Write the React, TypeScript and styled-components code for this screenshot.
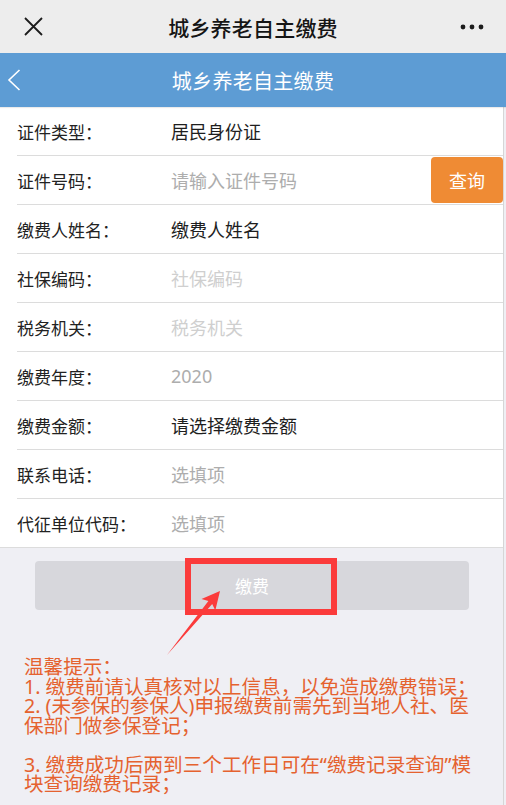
import React from "react";
import styled, { createGlobalStyle } from "styled-components";

const GlobalStyle = createGlobalStyle`
  html, body {
    margin: 0;
    padding: 0;
    background: #efeff4;
    font-family: "Noto Sans", "Noto Sans CJK SC", sans-serif;
  }
  * { box-sizing: border-box; }
`;

const Page = styled.div`
  width: 506px;
  min-height: 805px;
  background: #efeff4;
  display: flex;
  flex-direction: column;
`;

const TopBar = styled.header`
  height: 53px;
  background: #ededed;
  display: grid;
  grid-template-columns: 70px 1fr 70px;
  align-items: center;
`;

const TopTitle = styled.h1`
  margin: 0;
  text-align: center;
  font-size: 21px;
  font-weight: 500;
  color: #151515;
  letter-spacing: 0.2px;
`;

const IconSlot = styled.div<{ $align: "start" | "end" }>`
  display: flex;
  justify-content: ${(p) => (p.$align === "start" ? "flex-start" : "flex-end")};
  padding: ${(p) => (p.$align === "start" ? "0 0 0 24px" : "0 22px 0 0")};
  align-items: center;
`;

const NavBar = styled.nav`
  height: 54px;
  background: #5d9cd4;
  display: grid;
  grid-template-columns: 60px 1fr 60px;
  align-items: center;
  box-shadow: 0 1px 1px rgba(0, 0, 0, 0.08);
  position: relative;
  z-index: 1;
`;

const NavTitle = styled.div`
  text-align: center;
  font-size: 20px;
  color: #ffffff;
  letter-spacing: 0.3px;
`;

const Back = styled.div`
  padding-left: 7px;
  display: flex;
  align-items: center;
`;

const Content = styled.main`
  width: 504px;
  border-right: 1px solid #d6d6d6;
  flex: 1;
  display: flex;
  flex-direction: column;
`;

const Form = styled.section`
  background: #ffffff;
  border-bottom: 1px solid #dcdcdc;
`;

const Row = styled.div<{ $last?: boolean }>`
  height: ${(p) => (p.$last ? "48px" : "49px")};
  margin-left: 17px;
  border-bottom: ${(p) => (p.$last ? "none" : "1px solid #dcdcdc")};
  display: flex;
  align-items: center;
`;

const Label = styled.span`
  width: 154px;
  flex: none;
  font-size: 17px;
  color: #222222;
`;

const Value = styled.span<{ $tone: "dark" | "hint" | "faint" }>`
  flex: 1;
  font-size: 18px;
  color: ${(p) =>
    p.$tone === "dark" ? "#1e1e1e" : p.$tone === "hint" ? "#adadad" : "#cfcfcf"};
`;

const QueryButton = styled.button`
  width: 72px;
  height: 46px;
  margin-bottom: 1px;
  border: none;
  border-radius: 4px;
  background: #ef8b34;
  color: #ffffff;
  font-family: inherit;
  font-size: 18px;
  padding: 0;
`;

const ActionArea = styled.section`
  position: relative;
  flex: 1;
  padding-top: 13px;
  display: flex;
  flex-direction: column;
`;

const PayButton = styled.div`
  position: relative;
  height: 49px;
  margin: 0 34px 0 35px;
  border-radius: 4px;
  background: #d7d7dc;
  color: #ffffff;
  font-size: 17px;
  display: flex;
  align-items: center;
  justify-content: center;
`;

const Highlight = styled.div`
  position: absolute;
  left: 150px;
  top: -3px;
  width: 152px;
  height: 57px;
  border: 6px solid #fb3b3b;
`;

const Arrow = styled.svg`
  position: absolute;
  left: 0;
  top: 0;
  pointer-events: none;
`;

const Tips = styled.div`
  margin: 47px 0 0 24px;
  width: 459px;
  color: #e5622f;
  font-size: 19.6px;
  line-height: 19.5px;
`;

const TipLine = styled.div<{ $blank?: boolean }>`
  min-height: ${(p) => (p.$blank ? "19.5px" : "0")};
`;

const fields: { label: string; value: string; tone: "dark" | "hint" | "faint"; query?: boolean }[] = [
  { label: "证件类型：", value: "居民身份证", tone: "dark" },
  { label: "证件号码：", value: "请输入证件号码", tone: "hint", query: true },
  { label: "缴费人姓名：", value: "缴费人姓名", tone: "dark" },
  { label: "社保编码：", value: "社保编码", tone: "faint" },
  { label: "税务机关：", value: "税务机关", tone: "faint" },
  { label: "缴费年度：", value: "2020", tone: "hint" },
  { label: "缴费金额：", value: "请选择缴费金额", tone: "dark" },
  { label: "联系电话：", value: "选填项", tone: "hint" },
  { label: "代征单位代码：", value: "选填项", tone: "hint" },
];

export default function App() {
  return (
    <Page>
      <GlobalStyle />
      <TopBar>
        <IconSlot $align="start">
          <svg width="19" height="19" viewBox="0 0 19 19">
            <path d="M1 1 L18 18 M18 1 L1 18" stroke="#1c1c1c" strokeWidth="1.8" fill="none" />
          </svg>
        </IconSlot>
        <TopTitle>城乡养老自主缴费</TopTitle>
        <IconSlot $align="end">
          <svg width="24" height="6" viewBox="0 0 24 6">
            <circle cx="3" cy="3" r="2.4" fill="#1c1c1c" />
            <circle cx="12" cy="3" r="2.4" fill="#1c1c1c" />
            <circle cx="21" cy="3" r="2.4" fill="#1c1c1c" />
          </svg>
        </IconSlot>
      </TopBar>
      <NavBar>
        <Back>
          <svg width="14" height="22" viewBox="0 0 14 22">
            <path d="M12.5 1 L2 11 L12.5 21" stroke="#ffffff" strokeWidth="1.6" fill="none" />
          </svg>
        </Back>
        <NavTitle>城乡养老自主缴费</NavTitle>
        <div />
      </NavBar>
      <Content>
        <Form>
          {fields.map((f, i) => (
            <Row key={f.label} $last={i === fields.length - 1}>
              <Label>{f.label}</Label>
              <Value $tone={f.tone}>{f.value}</Value>
              {f.query && <QueryButton>查询</QueryButton>}
            </Row>
          ))}
        </Form>
        <ActionArea>
          <PayButton>
            缴费
            <Highlight />
          </PayButton>
          <Arrow width="504" height="258" viewBox="0 0 504 258">
            <polygon
              points="220,43 215.3,62.6 212.2,56.1 167,107 208.4,52.9 201.5,51"
              fill="#fb3b3b"
            />
          </Arrow>
          <Tips>
            <TipLine>温馨提示：</TipLine>
            <TipLine>1. 缴费前请认真核对以上信息，以免造成缴费错误；</TipLine>
            <TipLine>2. (未参保的参保人)申报缴费前需先到当地人社、医保部门做参保登记；</TipLine>
            <TipLine $blank />
            <TipLine>3. 缴费成功后两到三个工作日可在“缴费记录查询”模块查询缴费记录；</TipLine>
          </Tips>
        </ActionArea>
      </Content>
    </Page>
  );
}
